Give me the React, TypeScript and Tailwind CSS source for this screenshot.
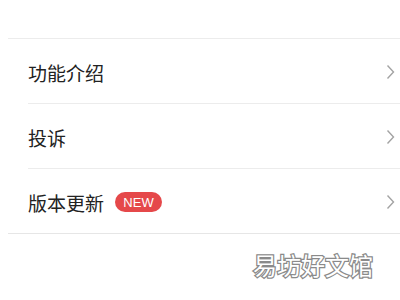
const rows = [
  { label: '功能介绍', badge: false },
  { label: '投诉', badge: false },
  { label: '版本更新', badge: true },
];

const Chevron = () => (
  <svg width="9" height="16" viewBox="0 0 9 16" className="shrink-0">
    <path d="M1.5 1.5 L7.5 8 L1.5 14.5" fill="none" stroke="#a3a3a3" strokeWidth="1.4" />
  </svg>
);

export default function App() {
  return (
    <div
      className="relative h-[300px] w-[400px] overflow-hidden bg-white"
      style={{ fontFamily: '"Noto Sans CJK SC", "Noto Sans", sans-serif' }}
    >
      <div className="pt-[38px]">
        <div className="ml-[8px] border-t border-[#ececec]" />
        {rows.map((row, i) => (
          <div key={row.label}>
            <div className="flex h-[64px] items-center pl-[28px] pr-[5px] pt-[2px]">
              <span className="text-[19px] leading-none text-[#222]">{row.label}</span>
              {row.badge && (
                <span className="ml-[11px] flex h-[20px] w-[47px] items-center justify-center rounded-full bg-[#e5484a] text-[13px] leading-none text-white [font-family:'Liberation_Sans',sans-serif]">
                  NEW
                </span>
              )}
              <span className="flex-1" />
              <Chevron />
            </div>
            <div
              className={
                i === rows.length - 1
                  ? 'ml-[8px] border-t border-[#e6e6e6]'
                  : 'ml-[28px] border-t border-[#ececec]'
              }
            />
          </div>
        ))}
      </div>
      <div className="absolute left-[253px] top-[253px] text-[24px] leading-none text-white [-webkit-text-stroke:2.5px_#8a8a8a] [paint-order:stroke_fill]">
        易坊好文馆
      </div>
    </div>
  );
}
